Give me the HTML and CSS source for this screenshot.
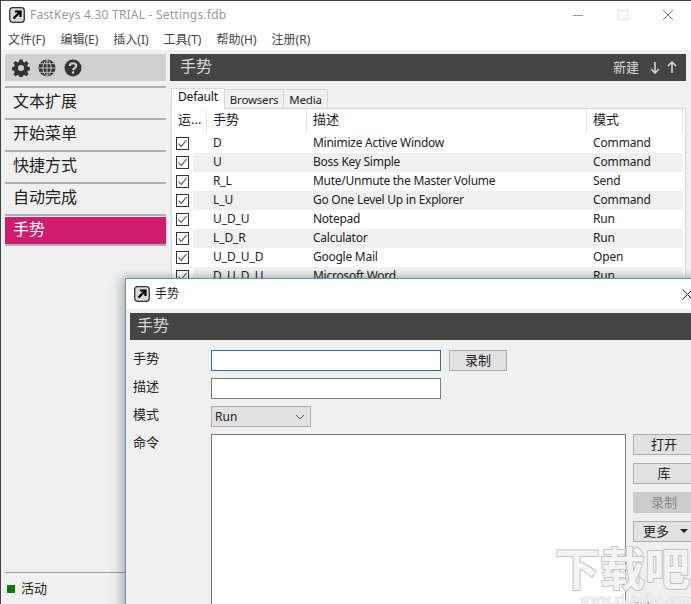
FILE: index.html
```html
<!DOCTYPE html>
<html lang="zh">
<head>
<meta charset="utf-8">
<title>FastKeys</title>
<link rel="stylesheet" href="styles.css">
</head>
<body>
<svg class="defs" width="0" height="0">
  <symbol id="app" viewBox="0 0 16 16">
    <rect x="0.7" y="0.7" width="14.6" height="14.6" rx="3" fill="#d8d8d8" stroke="#333" stroke-width="1.3"/>
    <path d="M4.5 11.5 L10.5 5.5 M6 4.5 H11.5 V10" fill="none" stroke="#000" stroke-width="2.2"/>
  </symbol>
  <symbol id="check" viewBox="0 0 13 13">
    <rect x="0.5" y="0.5" width="12" height="12" fill="#fff" stroke="#333"/>
    <path d="M2.5 6.5 L5.2 9.5 L10.5 3" fill="none" stroke="#444" stroke-width="1.1"/>
  </symbol>
</svg>
<div class="win">
  <div class="titlebar">
    <svg class="appicon"><use href="#app"/></svg>
    <span class="wintitle">FastKeys 4.30 TRIAL - Settings.fdb</span>
    <div class="caption">
      <svg width="12" height="12" viewBox="0 0 12 12"><path d="M1 6.500 H11" stroke="#999"/></svg>
      <svg width="12" height="12" viewBox="0 0 12 12"><rect x="1.500" y="1.500" width="9" height="9" fill="none" stroke="#e2e2e2"/></svg>
      <svg width="12" height="12" viewBox="0 0 12 12"><path d="M1 1 L11 11 M11 1 L1 11" stroke="#777"/></svg>
    </div>
  </div>
  <div class="menubar">
    <span>文件(F)</span><span>编辑(E)</span><span>插入(I)</span><span>工具(T)</span><span>帮助(H)</span><span>注册(R)</span>
  </div>
  <div class="main">
    <aside class="side">
      <div class="tools">
        <svg width="18" height="18" viewBox="0 0 18 18"><path fill="#333" fill-rule="evenodd" d="M7.500 0.500h3l.5 2.300 1.500.6 2-1.300 2.100 2.100-1.300 2 .6 1.500 2.300.5v3l-2.300.5-.6 1.500 1.300 2-2.100 2.100-2-1.300-1.500.6-.5 2.300h-3l-.5-2.300-1.500-.6-2 1.300-2.100-2.100 1.300-2-.6-1.500-2.300-.5v-3l2.300-.5.6-1.500-1.300-2 2.100-2.100 2 1.300 1.500-.6zM9 6a3 3 0 1 0 0 6 3 3 0 0 0 0-6z"/></svg>
        <svg width="18" height="18" viewBox="0 0 18 18"><circle cx="9" cy="9" r="8.500" fill="#333"/><path d="M9 .5V17.500M.5 9H17.500M2 4.700H16M2 13.300H16M9 .5C3.500 5 3.500 13 9 17.500M9 .5C14.500 5 14.500 13 9 17.500" fill="none" stroke="#d0d0d0" stroke-width=".9"/></svg>
        <svg width="18" height="18" viewBox="0 0 18 18"><circle cx="9" cy="9" r="8.500" fill="#333"/><path d="M5.800 7C5.800 3.400 12.200 3.400 12.200 7C12.200 9.200 9 9 9 11.300" fill="none" stroke="#d0d0d0" stroke-width="2.100"/><rect x="7.900" y="12.400" width="2.200" height="2.200" fill="#d0d0d0"/></svg>
      </div>
      <nav class="nav">
        <div class="navitem">文本扩展</div>
        <div class="navitem">开始菜单</div>
        <div class="navitem">快捷方式</div>
        <div class="navitem">自动完成</div>
        <div class="navitem active"><span>手势</span></div>
      </nav>
      <div class="status"><i class="dot"></i><span>活动</span></div>
    </aside>
    <section class="content">
      <header class="bar">
        <span class="bartitle">手势</span>
        <div class="baractions">
          <span>新建</span>
          <svg width="12" height="13" viewBox="0 0 12 13"><path d="M6 1V12M2 8L6 12L10 8" fill="none" stroke="#d8d8d8" stroke-width="1.500"/></svg>
          <svg width="12" height="13" viewBox="0 0 12 13"><path d="M6 12V1M2 5L6 1L10 5" fill="none" stroke="#d8d8d8" stroke-width="1.500"/></svg>
        </div>
      </header>
      <div class="tabs">
        <span class="tab on">Default</span><span class="tab">Browsers</span><span class="tab">Media</span>
      </div>
      <div class="table">
        <div class="thead">
          <span class="c1">运...</span><span class="c2">手势</span><span class="c3">描述</span><span class="c4">模式</span>
        </div>
        <div class="row"><svg class="cb"><use href="#check"/></svg><div class="cells"><span class="c2">D</span><span class="c3">Minimize Active Window</span><span class="c4">Command</span></div></div>
        <div class="row"><svg class="cb"><use href="#check"/></svg><div class="cells"><span class="c2">U</span><span class="c3">Boss Key Simple</span><span class="c4">Command</span></div></div>
        <div class="row"><svg class="cb"><use href="#check"/></svg><div class="cells"><span class="c2">R_L</span><span class="c3">Mute/Unmute the Master Volume</span><span class="c4">Send</span></div></div>
        <div class="row"><svg class="cb"><use href="#check"/></svg><div class="cells"><span class="c2">L_U</span><span class="c3">Go One Level Up in Explorer</span><span class="c4">Command</span></div></div>
        <div class="row"><svg class="cb"><use href="#check"/></svg><div class="cells"><span class="c2">U_D_U</span><span class="c3">Notepad</span><span class="c4">Run</span></div></div>
        <div class="row"><svg class="cb"><use href="#check"/></svg><div class="cells"><span class="c2">L_D_R</span><span class="c3">Calculator</span><span class="c4">Run</span></div></div>
        <div class="row"><svg class="cb"><use href="#check"/></svg><div class="cells"><span class="c2">U_D_U_D</span><span class="c3">Google Mail</span><span class="c4">Open</span></div></div>
        <div class="row"><svg class="cb"><use href="#check"/></svg><div class="cells"><span class="c2">D_U_D_U</span><span class="c3">Microsoft Word</span><span class="c4">Run</span></div></div>
      </div>
    </section>
  </div>
</div>

<div class="dialog">
  <div class="dtitle">
    <svg class="appicon small"><use href="#app"/></svg>
    <span>手势</span>
    <svg class="dclose" width="11" height="11" viewBox="0 0 11 11"><path d="M.5 .5 L10.500 10.500 M10.500 .5 L.5 10.500" stroke="#222"/></svg>
  </div>
  <div class="dbar">手势</div>
  <div class="form">
    <div class="frow">
      <label>手势</label><div class="input focus"></div><button class="btn rec">录制</button>
    </div>
    <div class="frow">
      <label>描述</label><div class="input"></div>
    </div>
    <div class="frow">
      <label>模式</label>
      <div class="select"><span>Run</span><svg width="10" height="6" viewBox="0 0 10 6"><path d="M1 1L5 5L9 1" fill="none" stroke="#555"/></svg></div>
    </div>
    <div class="frow cmd">
      <label>命令</label>
      <div class="textarea"></div>
      <div class="btns">
        <button class="btn">打开</button>
        <button class="btn">库</button>
        <button class="btn off">录制</button>
        <button class="btn more"><span>更多</span><i class="caret"></i></button>
        <span class="ovr">OVR</span>
      </div>
    </div>
  </div>
</div>
<div class="wm">下载吧<small>www.xiazaiba.com</small></div>
</body>
</html>
```
FILE: styles.css
```css
* { box-sizing: border-box; }
html, body { margin: 0; width: 691px; height: 604px; overflow: hidden; }
body {
  position: relative;
  background: #f0f0f0;
  font: 12px/16px "Noto Sans", "Noto Sans CJK SC", sans-serif;
  color: #222;
}
.defs { position: absolute; }

.win {
  height: 604px;
  display: flex;
  flex-direction: column;
  border-top: 1px solid #444;
  border-left: 1px solid #444;
}
.titlebar {
  height: 28px;
  flex: none;
  background: #fff;
  display: flex;
  align-items: center;
  padding-left: 8px;
  color: #999;
}
.appicon { width: 16px; height: 16px; flex: none; }
.wintitle { margin-left: 5px; font-size: 12px; letter-spacing: .22px; }
.caption {
  margin-left: auto;
  display: flex;
  gap: 33px;
  padding-right: 17px;
  margin-top: -1px;
}
.menubar {
  height: 21px;
  flex: none;
  background: #fff;
  display: flex;
  gap: 15px;
  padding: 3px 0 0 7px;
  color: #444;
}
.main { flex: 1; display: flex; min-height: 0; padding: 4px 5px 0 4px; gap: 4px; }

.side { width: 161px; flex: none; display: flex; flex-direction: column; padding-bottom: 0; }
.tools {
  height: 27px;
  flex: none;
  background: #d0d0d0;
  display: flex;
  align-items: center;
  gap: 8px;
  padding-left: 7px;
}
.nav { margin-top: 5px; flex: 1; }
.navitem {
  height: 32px;
  border-top: 2px solid #b0b0b0;
  font-size: 16px;
  line-height: 26px;
  padding-left: 8px;
  color: #222;
}
.navitem.active {
  height: 32px;
  padding-top: 1px;
  border-bottom: 2px solid #b0b0b0;
  color: #fff;
}
.navitem.active span {
  display: block;
  height: 27px;
  margin-left: -8px;
  padding-left: 8px;
  line-height: 25px;
  background: #d01c6c;
}
.status {
  height: 32px;
  flex: none;
  border-top: 1px solid #a0a0a0;
  display: flex;
  align-items: center;
  gap: 6px;
  padding: 0 0 2px 2px;
  font-size: 13px;
}
.dot { width: 8px; height: 8px; background: #0a7a0a; position: relative; top: 1px; }

.content { flex: 1; min-width: 0; display: flex; flex-direction: column; }
.bar {
  height: 27px;
  flex: none;
  background: #444;
  color: #d8d8d8;
  display: flex;
  align-items: center;
  justify-content: space-between;
  padding: 0 8px 0 10px;
}
.bartitle { font-size: 16px; position: relative; top: -2px; }
.baractions { display: flex; align-items: center; gap: 5px; font-size: 13px; }
.baractions span { margin-right: 4px; position: relative; left: -1px; top: -1px; }

.tabs { display: flex; height: 21px; margin-top: 6px; padding-left: 1px; flex: none; align-items: flex-end; }
.tab {
  height: 19px;
  border: 1px solid #d9d9d9;
  border-left: 0;
  border-bottom: 0;
  background: #f0f0f0;
  padding: 2px 5px 0 5px;
  line-height: 16px;
  font-size: 11.5px;
  letter-spacing: -.2px;
}
.tab.on {
  height: 21px;
  background: #fff;
  border-left: 1px solid #d9d9d9;
  padding: 0 6px 0 6px;
  position: relative;
  top: 1px;
  color: #111;
  font-size: 12px;
}
.table {
  flex: 1;
  min-height: 0;
  margin-left: 1px;
  background: #fff;
  border: 1px solid #d9d9d9;
}
.thead { height: 24px; display: flex; align-items: center; margin-bottom: 1px; font-size: 13px; }
.thead span { height: 24px; line-height: 21px; border-right: 1px solid #e4e4e4; }
.thead .c1 { width: 35px; padding-left: 6px; flex: none; }
.thead .c2 { width: 100px; flex: none; padding-left: 6px; }
.thead .c3 { width: 280px; flex: none; padding-left: 6px; }
.thead .c4 { width: 96px; flex: none; padding-left: 6px; }
.row { height: 19px; display: flex; align-items: center; padding-left: 4px; }
.cb { width: 13px; height: 13px; flex: none; }
.cells { flex: 1; height: 19px; margin-left: 4px; margin-right: 3px; display: flex; align-items: center; line-height: 18px; padding-bottom: 1px; }
.cells .c2 { width: 114px; flex: none; padding-left: 20px; letter-spacing: -.1px; }
.cells .c3 { width: 280px; flex: none; padding-left: 6px; letter-spacing: -.26px; }
.cells .c4 { width: 96px; flex: none; padding-left: 6px; letter-spacing: -.14px; }
.row:nth-child(odd) .cells { background: #f0f0f0; }

.dialog {
  position: absolute;
  left: 125px;
  top: 278px;
  width: 580px;
  height: 340px;
  background: #f0f0f0;
  border: 1px solid #5b93b8;
  box-shadow: -6px 0 10px rgba(0, 0, 0, .18), 0 -3px 6px rgba(0, 0, 0, .12);
}
.dtitle {
  height: 30px;
  background: #fff;
  display: flex;
  align-items: center;
  padding-left: 8px;
  gap: 5px;
  position: relative;
}
.dclose { position: absolute; left: 556px; top: 10px; }
.dbar {
  height: 27px;
  margin: 4px 0 0 4px;
  background: #444;
  color: #d8d8d8;
  font-size: 16px;
  line-height: 24px;
  padding-left: 7px;
}
.form { padding: 10px 0 0 7px; display: flex; flex-direction: column; gap: 7px; }
.frow { display: flex; align-items: flex-start; }
.frow label { width: 78px; flex: none; line-height: 16px; color: #222; font-size: 13px; }
.input { width: 230px; height: 21px; background: #fff; border: 1px solid #7a7a7a; }
.input.focus { border-color: #2f6f9f; }
.btn {
  font: inherit;
  font-size: 13px;
  color: #222;
  width: 62px;
  height: 21px;
  padding: 0 0 2px;
  border: 1px solid #adadad;
  background: #e1e1e1;
}
.rec { width: 58px; margin-left: 8px; }
.select {
  width: 100px;
  height: 21px;
  border: 1px solid #adadad;
  background: #e1e1e1;
  display: flex;
  align-items: center;
  justify-content: space-between;
  padding: 0 5px 0 3px;
}
.cmd { height: 170px; }
.textarea { width: 415px; height: 200px; background: #fff; border: 1px solid #7a7a7a; }
.btns { margin-left: 7px; display: flex; flex-direction: column; gap: 8px; width: 62px; position: relative; }
.btn.off { background: #ccc; color: #888; border-color: #ccc; }
.btn.more { display: flex; align-items: center; padding-left: 9px; gap: 11px; width: 60px; }
.caret { width: 0; height: 0; border: 4px solid transparent; border-top-color: #222; border-bottom: 0; }
.ovr { font-size: 10px; line-height: 12px; margin-top: 50px; color: #333; }

.wm {
  position: absolute;
  left: 555px;
  top: 539px;
  width: 140px;
  font: 700 45px/56px "Noto Sans CJK SC", sans-serif;
  color: #f4f4f4;
  -webkit-text-stroke: 2px #c4c4c4;
  paint-order: stroke fill;
  white-space: nowrap;
  pointer-events: none;
}
.wm small {
  position: absolute;
  left: 25px;
  top: 55px;
  font: 700 12px/12px "Noto Sans", sans-serif;
  -webkit-text-stroke: .4px #bbb;
  color: #f0f0f0;
}
```
